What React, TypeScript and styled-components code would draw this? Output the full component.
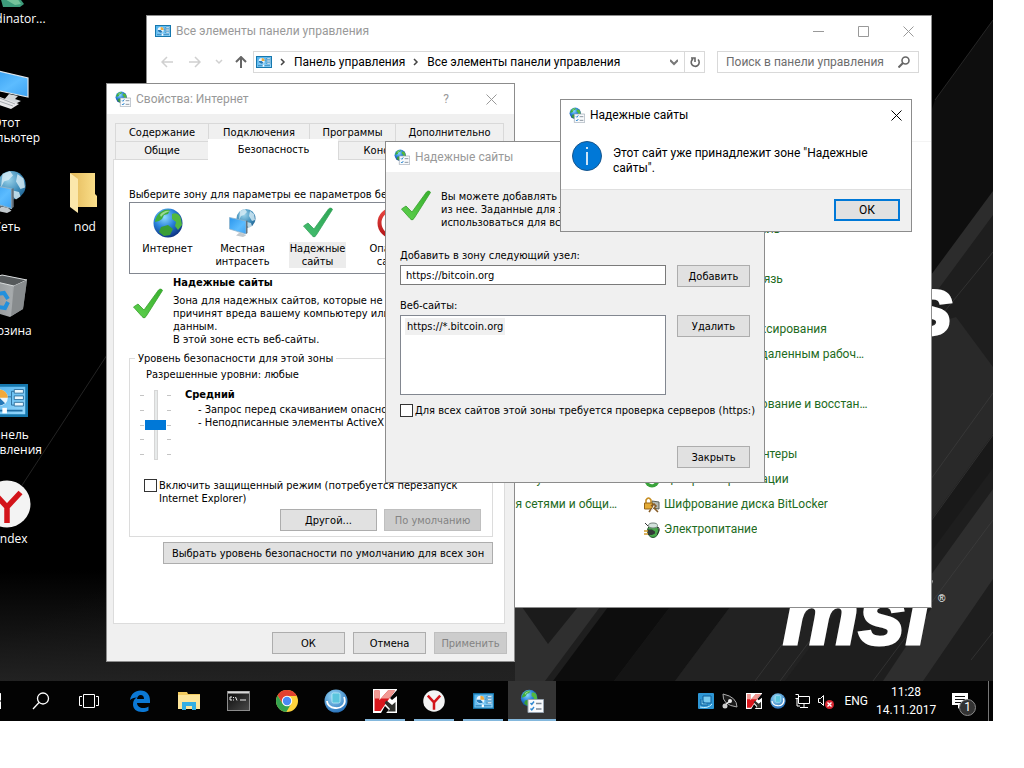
import React from 'react';
import styled, { createGlobalStyle, css } from 'styled-components';

const tahoma = '"DejaVu Sans Condensed", "Open Sans", sans-serif';
const segoe = 'Roboto, "Open Sans", sans-serif';

const GlobalStyle = createGlobalStyle`
  * { box-sizing: border-box; }
  body { margin: 0; background: #fff; font-family: ${segoe}; font-size: 12px; line-height: 15px; color: #000; }
  button, input { font: inherit; color: inherit; margin: 0; }
  ul { list-style: none; margin: 0; padding: 0; }
  p, h1, h2 { margin: 0; }
  svg { display: block; flex: none; }
`;

/* ---------- icons ---------- */

const GlobeShapes = () => (
  <>
    <circle cx="16" cy="16" r="14.5" fill="url(#globeFill)" />
    <path d="M5 9c4-6 9-7 13-6l-2 4-4 1-2 4-3 2-4 1c0-2 1-4 2-6z" fill="#3fae3c" />
    <path d="M20 7c4-2 8 0 9 5l1 6-4 5-3-4 1-4-4-3z" fill="#52b83f" />
    <path d="M9 20l7-2 5 4-3 6-6 1-5-4z" fill="#3a9e35" />
    <path d="M8 8c2-3 6-5 10-4-3 1-7 3-9 6z" fill="#d9f5c9" opacity=".6" />
  </>
);

const Gradients = () => (
  <svg width="0" height="0" aria-hidden="true" style={{ position: 'absolute' }}>
    <defs>
      <radialGradient id="globeFill" cx=".38" cy=".3" r=".8">
        <stop offset="0" stopColor="#8fdcff" />
        <stop offset=".45" stopColor="#2a82dc" />
        <stop offset="1" stopColor="#07226f" />
      </radialGradient>
      <radialGradient id="netFill" cx=".4" cy=".3" r=".8">
        <stop offset="0" stopColor="#9bd3ea" />
        <stop offset=".6" stopColor="#3b8ab8" />
        <stop offset="1" stopColor="#1d5b8a" />
      </radialGradient>
      <linearGradient id="screenFill" x1="0" y1="0" x2="1" y2="1">
        <stop offset="0" stopColor="#2b96ec" />
        <stop offset=".6" stopColor="#5cbcff" />
        <stop offset="1" stopColor="#3da2f2" />
      </linearGradient>
      <linearGradient id="panelFill" x1="0" y1="0" x2="1" y2="1">
        <stop offset="0" stopColor="#4bb0ec" />
        <stop offset="1" stopColor="#98d8fc" />
      </linearGradient>
      <linearGradient id="tickFill" x1="1" y1="0" x2="0" y2="1">
        <stop offset="0" stopColor="#38b02e" />
        <stop offset="1" stopColor="#5fd14e" />
      </linearGradient>
      <linearGradient id="tickTeal" x1="1" y1="0" x2="0" y2="1">
        <stop offset="0" stopColor="#2da553" />
        <stop offset="1" stopColor="#45be70" />
      </linearGradient>
      <linearGradient id="binFill" x1="0" y1="0" x2="1" y2="0">
        <stop offset="0" stopColor="#8b8f92" />
        <stop offset=".6" stopColor="#a7abad" />
        <stop offset="1" stopColor="#6f7375" />
      </linearGradient>
      <linearGradient id="folderFill" x1="0" y1="0" x2="1" y2="0">
        <stop offset="0" stopColor="#e3b95a" />
        <stop offset="1" stopColor="#fbe08c" />
      </linearGradient>
      <linearGradient id="redFill" x1="0" y1="0" x2="0" y2="1">
        <stop offset="0" stopColor="#ee4b45" />
        <stop offset="1" stopColor="#ad1013" />
      </linearGradient>
      <radialGradient id="blueOrb" cx=".4" cy=".3" r=".8">
        <stop offset="0" stopColor="#9bdcf8" />
        <stop offset="1" stopColor="#1c66b4" />
      </radialGradient>
      <linearGradient id="cmdFill" x1="0" y1="0" x2="1" y2="1">
        <stop offset="0" stopColor="#0a0a0a" />
        <stop offset="1" stopColor="#4a4a4a" />
      </linearGradient>
    </defs>
  </svg>
);

const Globe = ({ size = 32 }: { size?: number }) => (
  <svg width={size} height={size} viewBox="0 0 32 32"><GlobeShapes /></svg>
);

const OptionsIcon = ({ size = 16 }: { size?: number }) => (
  <svg width={size} height={size} viewBox="0 0 24 24">
    <g transform="scale(.58)"><GlobeShapes /></g>
    <path d="M8 10.500h15.500V23.500H8z" fill="#f8fafc" stroke="#98a4b0" />
    <path d="M10.500 14l1.300 1.500 2.200-3M10.500 19.500l1.300 1.500 2.200-3" fill="none" stroke="#2c86d0" strokeWidth="1.400" />
    <path d="M16 14.500h5.500M16 20h5.500" stroke="#7c8894" strokeWidth="1.300" />
  </svg>
);

const NetworkIcon = ({ size = 32 }: { size?: number }) => (
  <svg width={size} height={size} viewBox="0 0 32 32">
    <circle cx="19" cy="11.500" r="9.500" fill="url(#netFill)" />
    <path d="M13 4l5-2 2 3-3 3-3 1-2 4zM23 4l4 3 1 6-3 1-3-5zM20 15l4 1 1 3-3 2-3-3z" fill="#d9eef6" opacity=".8" />
    <path d="M2.500 10.500l16.500 3.500V27L2.500 22z" fill="url(#screenFill)" stroke="#8fb4cc" strokeWidth=".8" />
    <path d="M19 14l1.500-.5v12.500L19 27z" fill="#66727c" />
    <path d="M9 25l3 1-3 2.500 7 1.500 3-1.500-2.500-2" fill="#c2c9ce" />
  </svg>
);

const MonitorIcon = () => (
  <svg width="48" height="48" viewBox="0 0 48 48">
    <path d="M3 4l42 10v19L3 24z" fill="url(#screenFill)" stroke="#dfe5ea" strokeWidth="1.200" />
    <path d="M26 30l9 2-3 3 6 2-6 3-12-3z" fill="#d3d7da" />
    <path d="M12 31l24 9-8 5L4 37z" fill="#e8e8ea" />
    <path d="M10 35l20 7M14 33l18 7" stroke="#a6abb0" />
  </svg>
);

const BinIcon = () => (
  <svg width="48" height="48" viewBox="0 0 48 48">
    <path d="M5 8l14-5 25 5-4 29-13 8-16-5z" fill="url(#binFill)" />
    <path d="M5 8l14-5 25 5-13 6z" fill="#55595b" stroke="#d7dadb" />
    <path d="M31 14l13-6-4 29-12 7z" fill="#888c8e" />
    <path d="M14 22l7-1 4 6M25 30l-3 6-7-1" fill="none" stroke="#2290dd" strokeWidth="4" />
  </svg>
);

const PanelIcon = ({ w = 16 }: { w?: number }) => (
  <svg width={w} height={Math.round((w * 3) / 4)} viewBox="0 0 48 36">
    <rect x="1.500" y="1.500" width="45" height="33" fill="url(#panelFill)" stroke="#1677ad" strokeWidth="3" />
    <circle cx="17" cy="15" r="9" fill="#eaf6fd" />
    <path d="M17 15V6a9 9 0 0 1 9 9z" fill="#f2a93a" />
    <path d="M8 15h9l6 6a9 9 0 0 1-15-6z" fill="#2579b8" />
    <path d="M26 14h4V8h3M30 14v9h3" fill="none" stroke="#2c6f9e" />
    <path d="M33 6h10v4H33zM33 13h10v4H33zM33 20h10v4H33z" fill="#e9f6fd" stroke="#2c6f9e" />
    <path d="M6 29h36" stroke="#1f6da3" strokeWidth="2" />
    <path d="M20 26h5v6h-5z" fill="#fff" />
  </svg>
);

const YandexIcon = ({ size = 48 }: { size?: number }) => (
  <svg width={size} height={size} viewBox="0 0 48 48">
    <circle cx="24" cy="24" r="23.500" fill="#f3f3f3" />
    <path d="M10.500 12.500L24 27 37.500 12.500M24 26v17" fill="none" stroke="#d3141a" strokeWidth="5.500" />
  </svg>
);

const FolderIcon = () => (
  <svg width="48" height="48" viewBox="0 0 48 48">
    <path d="M9 5h25v21l2 2v11H17z" fill="url(#folderFill)" />
    <path d="M9 5l8 6v34l-8-6z" fill="#fbe7ab" />
  </svg>
);

const TickIcon = ({ teal = false }: { teal?: boolean }) => (
  <svg width="32" height="32" viewBox="0 0 32 32">
    <path d="M1.500 19l4.500-3 6 6L26.500 2c1.500-1.500 3.500-1 4 .5L14 28.500q-2 3-4 0z"
      fill={teal ? 'url(#tickTeal)' : 'url(#tickFill)'} stroke={teal ? '#36a25c' : '#37a02c'} strokeWidth=".8" />
  </svg>
);

const BlockedIcon = () => (
  <svg width="32" height="32" viewBox="0 0 32 32">
    <circle cx="16" cy="16" r="15.500" fill="url(#redFill)" />
    <circle cx="16" cy="16" r="9.500" fill="none" stroke="#fff" strokeWidth="4" />
    <path d="M9.500 9.500l13 13" stroke="#fff" strokeWidth="4" />
  </svg>
);

const InfoIcon = () => (
  <svg width="30" height="30" viewBox="0 0 30 30">
    <circle cx="15" cy="15" r="14.500" fill="#0078d7" stroke="#17558c" />
    <path d="M15 11v13M15 6v2" stroke="#fff" strokeWidth="1.600" />
  </svg>
);

const CloseIcon = () => (
  <svg width="11" height="11" viewBox="0 0 11 11"><path d="M.5.5l10 10M10.500.5l-10 10" stroke="currentColor" /></svg>
);

const TeamIcon = () => (
  <svg width="48" height="48" viewBox="0 0 48 48"><path d="M17 36h18l6 8-4 3H20z" fill="#3d9c7b" /><path d="M20 38h14l4 6-6 1z" fill="#75c39b" /></svg>
);

const OrbIcon = ({ size = 24 }: { size?: number }) => (
  <svg width={size} height={size} viewBox="0 0 24 24">
    <circle cx="12" cy="12" r="11.500" fill="url(#blueOrb)" />
    <path d="M20 8c3 7-3 12-9 11-5 0-8-4-8-7" fill="none" stroke="#fff" strokeWidth="1.800" />
    <rect x="8" y="4" width="8" height="10" rx="1.500" fill="#5bc5dd" stroke="#c4f1fa" strokeWidth=".7" />
  </svg>
);

const KasperskyIcon = ({ size = 24 }: { size?: number }) => (
  <svg width={size} height={size} viewBox="0 0 24 24">
    <path d="M0 0h24v1l-7 8 2 2 5-4v17h-11l3-3-4-4-4 7H0z" fill="#fff" />
    <path d="M1.500 1.500h5V11l8.500-9.500h7L7.500 22H1.500z" fill="#d9161c" />
    <path d="M1.500 1.500h5V11l8.500-9.500h7L16 9.500H1.500z" fill="#f19a94" />
    <path d="M11.500 14l2-2.500 5.500 4.500 3.500-3v9.500H15l2-2.500z" fill="#30302c" />
  </svg>
);

const EdgeIcon = () => (
  <svg width="22" height="22" viewBox="0 0 22 22">
    <path d="M1 10C2 4 6 .5 11.500.5 18 .5 21 5 21 10.500V13H8c.3 3.500 3 5 6 5 2.200 0 4-.5 5.500-1.500v4c-2 1-4 1.500-6.500 1.500-5.500 0-9-3-9-7.500C4 11 5.500 8.500 8 7.500 5 7.500 2.500 8.500 1 10zm7-1h7c0-2.500-1.200-4-3.300-4C9.500 5 8.300 6.700 8 9z" fill="#0b78d4" />
  </svg>
);

const ExplorerIcon = () => (
  <svg width="22" height="20" viewBox="0 0 22 20">
    <path d="M0 1h9l1 2h12v15H0z" fill="#f3cb5f" /><path d="M0 4h22v14H0z" fill="#fde59a" />
    <path d="M4 11h14v8h-4v-4H8v4H4z" fill="#34aee2" />
  </svg>
);

const CmdIcon = () => (
  <svg width="23" height="20" viewBox="0 0 23 20">
    <rect x=".5" y=".5" width="22" height="19" fill="url(#cmdFill)" stroke="#8c8c8c" />
    <path d="M1 1.500h21" stroke="#d8d8d8" strokeWidth="2" />
    <path d="M5 6H3v3h2M6.500 6v1M6.500 8.500v1M8.500 6l1.500 3.500M13 9h6" fill="none" stroke="#eee" />
  </svg>
);

const ChromeIcon = () => (
  <svg width="22" height="22" viewBox="0 0 22 22">
    <circle cx="11" cy="11" r="11" fill="#fdd23c" />
    <path d="M11 6h9.800A11 11 0 0 0 1.500 5.500L6.500 13.500 11 11z" fill="#e2402f" />
    <path d="M1.500 5.500a11 11 0 0 0 8.800 16.500L15 14l-8.500-.5z" fill="#34a350" />
    <circle cx="11" cy="11" r="5.200" fill="#fff" /><circle cx="11" cy="11" r="4.200" fill="#4a8af4" />
  </svg>
);

/* ---------- desktop ---------- */

const Page = styled.div`
  min-height: 100vh;
  display: flex;
  flex-direction: column;
  padding: 0 31px 47px 0;
  overflow: hidden;
`;

const Screen = styled.div`
  flex: 1;
  display: flex;
  flex-direction: column;
  overflow: hidden;
  background: #000;
`;

const Desktop = styled.main`
  position: relative;
  flex: 1;
  min-height: 664px;
  overflow: hidden;
`;

const Backdrop = styled.svg`
  position: absolute;
  inset: 0;
  width: 100%;
  height: 100%;
`;

const Shortcuts = styled.nav`
  position: absolute;
  top: -40px;
  left: -31px;
  display: grid;
  grid-template-columns: 76px 76px;
  grid-auto-rows: 104px;
  column-gap: 2px;
  font-family: "Open Sans", sans-serif;
`;

const Shortcut = styled.a<{ $col?: number; $row: number }>`
  grid-column: ${p => p.$col ?? 1};
  grid-row: ${p => p.$row};
  display: flex;
  flex-direction: column;
  align-items: center;
  gap: 3px;
  color: #fff;
  text-align: center;
  text-decoration: none;
  text-shadow: 0 1px 2px #000;
`;

const Wallpaper = () => (
  <Backdrop viewBox="0 0 993 681" preserveAspectRatio="xMaxYMax slice" aria-hidden="true">
    <defs>
      <linearGradient id="wall" x1="0" y1="0" x2=".75" y2="1">
        <stop offset=".6" stopColor="#000" />
        <stop offset=".85" stopColor="#161616" />
        <stop offset="1" stopColor="#242424" />
      </linearGradient>
      <linearGradient id="floor" x1="0" y1="0" x2="0" y2="1">
        <stop offset="0" stopColor="#222" stopOpacity="0" />
        <stop offset="1" stopColor="#222" />
      </linearGradient>
    </defs>
    <rect width="993" height="681" fill="#000" />
    <rect width="993" height="681" fill="url(#wall)" />
    <path d="M0 570h520v111H0z" fill="url(#floor)" />
    <path d="M993 20L935 100l-10 30v140h68z" fill="#0e0e0e" />
    <path d="M931 290l62-84v475H515V607h416z" fill="#1e1e1e" />
    <path d="M931 275l62-84v24l-62 84z" fill="#2c2c2c" />
    <path d="M931 325l25-8 37 50v85l-62 86z" fill="#292929" />
    <path d="M931 520l62-86v34l-62 84z" fill="#191919" />
    <path d="M931 575l62-86v90l-70 102h-40l48-72z" fill="#2e2e2e" />
    <path d="M515 607h85l-55 74h-30z" fill="#2f2f2f" />
    <path d="M522 607h56l-30 37z" fill="#1b1b1b" />
    <path d="M608 607h62l-56 74h-61z" fill="#0d0d0d" />
    <path d="M670 607h60l-55 74h-61z" fill="#141414" />
    <path d="M730 607h110l-55 74H675z" fill="#222" />
    <path d="M0 519L107 355M993 20L935 100M993 252l-62 76M993 393l-62 86M993 435l-62 86M993 520l-120 161M993 632l-22 28M810 607l-55 74M835 607l-55 74" stroke="#454545" fill="none" opacity=".5" />
    <g fill="#fff" stroke="#fff" strokeWidth="3" fontFamily="Liberation Sans, sans-serif" fontWeight="700" fontStyle="italic">
      <text x="783" y="644" fontSize="85">msi</text>
      <text x="908" y="334" fontSize="82">s</text>
    </g>
    <text x="938" y="602" fontSize="10" fill="#fff" fontFamily="Liberation Sans, sans-serif">®</text>
  </Backdrop>
);

/* ---------- windows ---------- */

const Frame = styled.section<{ $x: number; $y: number; $w: number; $h: number }>`
  position: absolute;
  isolation: isolate;
  left: ${p => p.$x}px;
  top: ${p => p.$y}px;
  width: ${p => p.$w}px;
  min-height: ${p => p.$h}px;
  display: flex;
  flex-direction: column;
  border: 1px solid #8c8c8c;
  background: #fff;
`;

const Dialog = styled(Frame)`
  background: #f0f0f0;
  font-family: ${tahoma};
  font-size: 11px;
  line-height: 13px;
`;

const TitleBar = styled.header<{ $active?: boolean }>`
  display: flex;
  align-items: center;
  gap: 5px;
  height: 30px;
  padding: 0 3px 0 8px;
  background: #fff;
  color: ${p => (p.$active ? '#000' : '#999')};
  font-family: ${segoe};
  font-size: 12px;
  h1 { flex: 1; font-size: inherit; font-weight: 400; }
`;

const WindowButtons = styled.div`
  display: flex;
  gap: 21px;
  padding-right: 8px;
`;

const IconButton = styled.button`
  display: flex;
  align-items: center;
  justify-content: center;
  min-width: 24px;
  height: 24px;
  padding: 0;
  border: 0;
  background: none;
`;

const NavBar = styled.div`
  display: flex;
  align-items: center;
  height: 32px;
  padding: 0 12px 0 8px;
  color: #777;
`;

const NavButtons = styled.div`
  display: flex;
  align-items: center;
  width: 98px;
  gap: 4px;
`;

const AddressBar = styled.div`
  flex: 1;
  display: flex;
  align-items: center;
  gap: 7px;
  height: 22px;
  padding-left: 2px;
  border: 1px solid #d9d9d9;
  color: #000;
`;

const AddressEnd = styled.div`
  display: flex;
  margin-left: auto;
  height: 20px;
  color: #777;
  & > button { height: 20px; width: 20px; min-width: 20px; }
  & > button + button { border-left: 1px solid #d9d9d9; }
`;

const SearchBox = styled.label`
  display: flex;
  align-items: center;
  width: 202px;
  height: 22px;
  margin-left: 12px;
  padding: 0 8px;
  border: 1px solid #d9d9d9;
  input { flex: 1; min-width: 0; padding: 0; border: 0; outline: 0; background: none; appearance: none; }
  input::placeholder { color: #6d6d6d; }
`;

const Items = styled.div`
  display: grid;
  grid-template-columns: repeat(3, 226px);
  grid-template-rows: repeat(13, 25px);
  column-gap: 20px;
  margin-top: 63px;
  padding: 75px 5px 0;
  border-top: 1px solid #f4f4f4;
`;

const Item = styled.a<{ $col: number; $row: number }>`
  grid-column: ${p => p.$col};
  grid-row: ${p => p.$row};
  display: flex;
  align-items: center;
  gap: 4px;
  color: #1e6b22;
  text-decoration: none;
  span { overflow: hidden; white-space: nowrap; text-overflow: ellipsis; }
`;

const Button = styled.button<{ $w: number; $default?: boolean }>`
  width: ${p => p.$w}px;
  height: 22px;
  flex: none;
  padding: 0;
  border: ${p => (p.$default ? '2px solid #0078d7' : '1px solid #adadad')};
  background: #e1e1e1;
  white-space: nowrap;
  &:disabled { background: #ccc; border-color: #bfbfbf; color: #838383; }
`;

const CheckRow = styled.label<{ $top?: number }>`
  display: flex;
  align-items: flex-start;
  gap: 2px;
  margin-top: ${p => p.$top ?? 0}px;
  white-space: nowrap;
  input { appearance: none; width: 13px; height: 13px; flex: none; border: 1px solid #333; background: #fff; }
`;

/* ---------- Internet properties ---------- */

const PropertiesBody = styled.div`
  padding: 9px 7px 0 6px;
`;

const TabRow = styled.div<{ $front?: boolean }>`
  display: flex;
  align-items: flex-start;
  height: 18px;
  padding: 0 2px;
  position: relative;
  z-index: ${p => (p.$front ? 1 : 0)};
`;

const Tab = styled.button<{ $w: number; $selected?: boolean }>`
  width: ${p => p.$w}px;
  height: 19px;
  flex: none;
  padding: 0;
  border: 1px solid #d9d9d9;
  border-right-width: 0;
  background: #f0f0f0;
  &:last-child { border-right-width: 1px; }
  ${p => p.$selected && css`
    height: 21px;
    margin-top: -2px;
    background: #fff;
    border-color: #fff;
  `}
`;

const Pane = styled.div`
  height: 465px;
  margin-right: 2px;
  padding: 28px 11px 0 15px;
  border: 1px solid #dcdcdc;
  background: #fff;
`;

const ZoneList = styled.ul`
  display: flex;
  height: 72px;
  margin-top: 1px;
  border: 1px solid #828790;
  overflow: hidden;
`;

const Zone = styled.li<{ $selected?: boolean }>`
  display: flex;
  flex-direction: column;
  align-items: center;
  width: 75px;
  flex: none;
  padding-top: 4px;
  gap: 3px;
  text-align: center;
  span { width: min-content; padding: 0 1px; ${p => p.$selected && 'background: #ececec;'} }
`;

const ZoneInfo = styled.div`
  display: flex;
  gap: 9px;
  padding: 2px 0 0 3px;
  & > svg { margin-top: 12px; }
  h2 { font-size: 11px; line-height: 13px; margin-bottom: 5px; }
`;

const Group = styled.fieldset`
  height: 185px;
  margin: 6px 0 0;
  padding: 3px 11px 0 16px;
  border: 1px solid #dcdcdc;
  min-width: 0;
  legend { margin-left: -11px; padding: 0 3px; }
  & > label { margin-left: -2px; }
`;

const Level = styled.div`
  display: flex;
  gap: 14px;
  height: 85px;
  margin: 7px 0 6px -6px;
  h2 { font-size: 11px; line-height: 13px; margin-bottom: 2px; }
  ul { padding-left: 13px; white-space: nowrap; }
`;

const SliderBox = styled.div`
  display: flex;
  height: 70px;
  margin-top: 2px;
`;

const Ticks = styled.div`
  display: flex;
  flex-direction: column;
  justify-content: space-between;
  width: 4px;
  padding: 5px 0;
  i { height: 1px; background: #c4c4c4; }
`;

const Slider = styled.input`
  appearance: none;
  writing-mode: vertical-lr;
  width: 23px;
  height: 70px;
  background: linear-gradient(#e7eaea, #e7eaea) center / 2px 68px no-repeat, linear-gradient(#d6d6d6, #d6d6d6) center / 4px 70px no-repeat;
  &::-webkit-slider-thumb { appearance: none; width: 21px; height: 10px; background: #0078d7; }
`;

const ButtonRow = styled.div<{ $gap: number; $top: number }>`
  display: flex;
  justify-content: flex-end;
  gap: ${p => p.$gap}px;
  margin-top: ${p => p.$top}px;
`;

/* ---------- Trusted sites ---------- */

const SitesBody = styled.div`
  display: flex;
  flex-direction: column;
  padding: 18px 14px 0;
`;

const Intro = styled.div`
  display: flex;
  gap: 9px;
  height: 46px;
`;

const Field = styled.div<{ $top: number }>`
  display: grid;
  grid-template-columns: 266px 73px;
  justify-content: space-between;
  row-gap: 3px;
  margin-top: ${p => p.$top}px;
  label, span { grid-column: 1 / -1; }
  input { height: 20px; padding: 0 5px; border: 1px solid #7a7a7a; background: #fff; outline: 0; }
`;

const SiteList = styled.ul`
  height: 80px;
  padding: 2px 4px;
  border: 1px solid #828790;
  background: #fff;
  li { width: max-content; padding: 2px; background: #f0f0f0; }
`;

/* ---------- message ---------- */

const Message = styled.div`
  flex: 1;
  display: flex;
  gap: 11px;
  padding: 11px 34px 0 11px;
  p { padding-top: 5px; }
`;

const MessageFooter = styled.footer`
  display: flex;
  justify-content: flex-end;
  padding: 9px 11px 10px;
  border-top: 1px solid #dfdfdf;
  background: #f0f0f0;
`;

/* ---------- taskbar ---------- */

const Taskbar = styled.footer`
  display: flex;
  height: 40px;
  flex: none;
  margin-left: -31px;
  background: #030303;
  color: #fff;
`;

const Launchers = styled.div<{ $gap: number; $left?: number }>`
  display: flex;
  gap: ${p => p.$gap}px;
  margin-left: ${p => p.$left ?? 0}px;
`;

const TaskButton = styled.button<{ $state?: 'open' | 'active' }>`
  position: relative;
  display: flex;
  align-items: center;
  justify-content: center;
  width: 48px;
  height: 40px;
  padding: 0;
  border: 0;
  background: ${p => (p.$state === 'active' ? '#343434' : 'transparent')};
  &::after {
    content: ${p => (p.$state ? '""' : 'none')};
    position: absolute;
    bottom: 0;
    left: ${p => (p.$state === 'active' ? 0 : 4)}px;
    right: ${p => (p.$state === 'active' ? 0 : 4)}px;
    height: 2px;
    background: #84b8dd;
  }
`;

const Tray = styled.div`
  display: flex;
  align-items: center;
  gap: 8px;
  margin-left: auto;
`;

const Language = styled.span`
  margin-left: 2px;
`;

const Clock = styled.time`
  width: 60px;
  text-align: center;
  line-height: 18px;
`;

const Notifications = styled.button`
  position: relative;
  width: 44px;
  height: 40px;
  margin-right: -8px;
  padding: 0 0 0 8px;
  border: 0;
  background: none;
`;

const Badge = styled.span`
  position: absolute;
  left: 15px;
  top: 18px;
  width: 17px;
  height: 17px;
  border: 1px solid #8a8a8a;
  border-radius: 50%;
  background: #333;
  line-height: 15px;
  text-align: center;
`;

const ShowDesktop = styled.div`
  width: 5px;
  height: 40px;
  border-left: 1px solid #777;
`;

const zones = [
  { name: 'Интернет', icon: <Globe /> },
  { name: 'Местная интрасеть', icon: <NetworkIcon /> },
  { name: 'Надежные сайты', icon: <TickIcon teal />, selected: true },
  { name: 'Опасные сайты', icon: <BlockedIcon /> },
];

const GreenDot = () => (
  <svg width="16" height="16" viewBox="0 0 16 16"><circle cx="8" cy="8" r="7.500" fill="#39a33b" /><path d="M4 8a4 4 0 0 1 7-2M12 8a4 4 0 0 1-7 2" stroke="#fff" fill="none" strokeWidth="1.500" /></svg>
);
const LockIcon = () => (
  <svg width="16" height="16" viewBox="0 0 16 16">
    <path d="M8 4l7 1v7l-7-1z" fill="#b6bbb4" stroke="#596058" />
    <path d="M2 6V3q2.500-4 5 0v3" fill="none" stroke="#c58b1d" strokeWidth="1.500" />
    <path d="M.5 6h8v6h-8z" fill="#e4ab36" stroke="#93651a" />
    <path d="M7 9l3-2 2 2-2 2 4 4M8 11l-3 4" fill="none" stroke="#875c26" strokeWidth="1.600" />
    <path d="M10 9l-3 5" stroke="#eee" />
  </svg>
);
const PowerIcon = () => (
  <svg width="16" height="16" viewBox="0 0 16 16">
    <ellipse cx="9" cy="9" rx="5.500" ry="6.500" fill="#48a94a" stroke="#22552b" />
    <ellipse cx="9" cy="3.500" rx="4.500" ry="2.500" fill="#d4e2dc" stroke="#73827b" />
    <path d="M14 5q3 3-1 7" fill="none" stroke="#333" />
    <path d="M0 9h4M0 12h4" stroke="#d19a2c" strokeWidth="1.500" />
    <path d="M4 7.500h4l3 2v2L8 13H4z" fill="#343b38" />
    <path d="M1 1l3 3" stroke="#333" />
  </svg>
);

const items = [
  { col: 3, row: 1, name: 'Графическая панель' },
  { col: 3, row: 3, name: 'Инфракрасная связь' },
  { col: 3, row: 5, name: 'Параметры индексирования' },
  { col: 3, row: 6, name: 'Подключения к удаленным рабочим столам' },
  { col: 3, row: 8, name: 'Резервное копирование и восстановление' },
  { col: 3, row: 10, name: 'Устройства и принтеры' },
  { col: 2, row: 11, name: 'Безопасность и обслуживание компьютера' },
  { col: 3, row: 11, name: 'Центр синхронизации', icon: <GreenDot /> },
  { col: 2, row: 12, name: 'Центр управления сетями и общим доступом' },
  { col: 3, row: 12, name: 'Шифрование диска BitLocker', icon: <LockIcon /> },
  { col: 3, row: 13, name: 'Электропитание', icon: <PowerIcon /> },
];

const Chevron = ({ down = false }: { down?: boolean }) => (
  <svg width="8" height="8" viewBox="0 0 8 8"><path d={down ? 'M0 2l4 4 4-4' : 'M2 1l3 3-3 3'} fill="none" stroke={down ? '#777' : '#444'} strokeWidth={down ? 2 : 1.5} /></svg>
);

const ControlPanel = () => (
  <Frame $x={146} $y={15} $w={786} $h={593}>
    <TitleBar>
      <PanelIcon />
      <h1>Все элементы панели управления</h1>
      <WindowButtons>
        <IconButton aria-label="Свернуть"><svg width="11" height="11"><path d="M0 5.500h11" stroke="currentColor" /></svg></IconButton>
        <IconButton aria-label="Развернуть"><svg width="11" height="11"><path d="M.5.5h10v10H.5z" fill="none" stroke="currentColor" /></svg></IconButton>
        <IconButton aria-label="Закрыть"><CloseIcon /></IconButton>
      </WindowButtons>
    </TitleBar>
    <NavBar>
      <NavButtons>
        <IconButton aria-label="Назад"><svg width="12" height="12"><path d="M12 6H1M6 1L1 6l5 5" fill="none" stroke="#d0d0d0" strokeWidth="1.500" /></svg></IconButton>
        <IconButton aria-label="Вперед"><svg width="12" height="12"><path d="M0 6h11M6 1l5 5-5 5" fill="none" stroke="#d0d0d0" strokeWidth="1.500" /></svg></IconButton>
        <svg width="14" height="6"><path d="M5 1l3 3 3-3" fill="none" stroke="#d0d0d0" strokeWidth="1.500" /></svg>
        <IconButton aria-label="Вверх"><svg width="12" height="12"><path d="M6 12V1M1 6l5-5 5 5" fill="none" stroke="#666" strokeWidth="2" /></svg></IconButton>
      </NavButtons>
      <AddressBar>
        <PanelIcon />
        <Chevron />
        <span>Панель управления</span>
        <Chevron />
        <span>Все элементы панели управления</span>
        <AddressEnd>
          <IconButton aria-label="Журнал"><Chevron down /></IconButton>
          <IconButton aria-label="Обновить"><svg width="12" height="12"><path d="M9 3.500A4 4 0 1 1 4 3M2 2h4v4" fill="none" stroke="#666" strokeWidth="1.600" /></svg></IconButton>
        </AddressEnd>
      </AddressBar>
      <SearchBox>
        <input type="search" placeholder="Поиск в панели управления" aria-label="Поиск в панели управления" />
        <svg width="12" height="12"><circle cx="7.500" cy="4.500" r="3.500" fill="none" stroke="#666" strokeWidth="1.600" /><path d="M5 7l-4.500 4.500" stroke="#666" strokeWidth="2" /></svg>
      </SearchBox>
    </NavBar>
    <Items>
      {items.map(i => (
        <Item key={i.name} href="#" $col={i.col} $row={i.row}>
          {i.icon ?? <PanelIcon />}
          <span>{i.name}</span>
        </Item>
      ))}
    </Items>
  </Frame>
);

const InternetProperties = () => (
  <Dialog $x={106} $y={83} $w={409} $h={579}>
    <TitleBar>
      <OptionsIcon />
      <h1>Свойства: Интернет</h1>
      <WindowButtons>
        <IconButton aria-label="Справка">?</IconButton>
        <IconButton aria-label="Закрыть"><CloseIcon /></IconButton>
      </WindowButtons>
    </TitleBar>
    <PropertiesBody>
      <TabRow>
        <Tab $w={93}>Содержание</Tab>
        <Tab $w={101}>Подключения</Tab>
        <Tab $w={86}>Программы</Tab>
        <Tab $w={109}>Дополнительно</Tab>
      </TabRow>
      <TabRow $front>
        <Tab $w={93}>Общие</Tab>
        <Tab $w={130} $selected>Безопасность</Tab>
        <Tab $w={166}>Конфиденциальность</Tab>
      </TabRow>
      <Pane>
        <p>Выберите зону для параметры ее параметров безопасности.</p>
        <ZoneList>
          {zones.map(z => (
            <Zone key={z.name} $selected={z.selected}>{z.icon}<span>{z.name}</span></Zone>
          ))}
        </ZoneList>
        <ZoneInfo>
          <TickIcon />
          <div>
            <h2>Надежные сайты</h2>
            <p>Зона для надежных сайтов, которые не<br />причинят вреда вашему компьютеру или<br />данным.<br />В этой зоне есть веб-сайты.</p>
          </div>
        </ZoneInfo>
        <Group>
          <legend>Уровень безопасности для этой зоны</legend>
          <p>Разрешенные уровни: любые</p>
          <Level>
            <SliderBox>
              <Ticks><i /><i /><i /><i /><i /></Ticks>
              <Slider type="range" min="0" max="4" defaultValue="2" aria-label="Уровень безопасности" />
              <Ticks><i /><i /><i /><i /><i /></Ticks>
            </SliderBox>
            <div>
              <h2>Средний</h2>
              <ul>
                <li>- Запрос перед скачиванием опасного</li>
                <li>- Неподписанные элементы ActiveX не</li>
              </ul>
            </div>
          </Level>
          <CheckRow>
            <input type="checkbox" />
            <span>Включить защищенный режим (потребуется перезапуск<br />Internet Explorer)</span>
          </CheckRow>
          <ButtonRow $gap={7} $top={4}>
            <Button $w={97}>Другой...</Button>
            <Button $w={97} disabled>По умолчанию</Button>
          </ButtonRow>
        </Group>
        <ButtonRow $gap={0} $top={5}>
          <Button $w={330}>Выбрать уровень безопасности по умолчанию для всех зон</Button>
        </ButtonRow>
      </Pane>
      <ButtonRow $gap={8} $top={8}>
        <Button $w={73}>ОК</Button>
        <Button $w={73}>Отмена</Button>
        <Button $w={73} disabled>Применить</Button>
      </ButtonRow>
    </PropertiesBody>
  </Dialog>
);

const TrustedSites = () => (
  <Dialog $x={385} $y={141} $w={380} $h={342}>
    <TitleBar>
      <OptionsIcon />
      <h1>Надежные сайты</h1>
    </TitleBar>
    <SitesBody>
      <Intro>
        <TickIcon />
        <p>Вы можете добавлять в эту зону веб-сайты и удалять их<br />из нее. Заданные для зоны параметры защиты будут<br />использоваться для всех сайтов зоны.</p>
      </Intro>
      <Field $top={13}>
        <label htmlFor="node">Добавить в зону следующий узел:</label>
        <input id="node" defaultValue="https://bitcoin.org" />
        <Button $w={73}>Добавить</Button>
      </Field>
      <Field $top={12}>
        <span>Веб-сайты:</span>
        <SiteList><li>https://*.bitcoin.org</li></SiteList>
        <Button $w={73}>Удалить</Button>
      </Field>
      <CheckRow $top={9}>
        <input type="checkbox" />
        <span>Для всех сайтов этой зоны требуется проверка серверов (https:)</span>
      </CheckRow>
      <ButtonRow $gap={0} $top={29}>
        <Button $w={73}>Закрыть</Button>
      </ButtonRow>
    </SitesBody>
  </Dialog>
);

const MessageBox = () => (
  <Frame $x={560} $y={99} $w={352} $h={133}>
    <TitleBar $active>
      <OptionsIcon />
      <h1>Надежные сайты</h1>
      <IconButton aria-label="Закрыть"><CloseIcon /></IconButton>
    </TitleBar>
    <Message>
      <InfoIcon />
      <p>Этот сайт уже принадлежит зоне "Надежные сайты".</p>
    </Message>
    <MessageFooter>
      <Button $w={66} $default>ОК</Button>
    </MessageFooter>
  </Frame>
);

const App = () => (
  <Page>
    <GlobalStyle />
    <Gradients />
    <Screen>
      <Desktop>
        <Wallpaper />
        <Shortcuts>
          <Shortcut href="#" $row={1}><TeamIcon />Coordinator...</Shortcut>
          <Shortcut href="#" $row={2}><MonitorIcon />Этот компьютер</Shortcut>
          <Shortcut href="#" $row={3}><NetworkIcon size={48} />Сеть</Shortcut>
          <Shortcut href="#" $row={3} $col={2}><FolderIcon />nod</Shortcut>
          <Shortcut href="#" $row={4}><BinIcon />Корзина</Shortcut>
          <Shortcut href="#" $row={5}><svg width="48" height="48" viewBox="0 0 48 48"><g transform="translate(1 8)"><PanelIcon w={44} /></g></svg>Панель управления</Shortcut>
          <Shortcut href="#" $row={6}><YandexIcon />Yandex</Shortcut>
        </Shortcuts>
        <ControlPanel />
        <InternetProperties />
        <TrustedSites />
        <MessageBox />
      </Desktop>
      <Taskbar>
        <Launchers $gap={0}>
          <TaskButton aria-label="Пуск"><svg width="16" height="16"><path d="M0 2l7-1v6.500H0zM8 1l8-1v7.500H8zM0 8.500h7V15l-7-1zM8 8.500h8V16l-8-1z" fill="#fff" /></svg></TaskButton>
          <TaskButton aria-label="Поиск"><svg width="18" height="18"><circle cx="11" cy="6.500" r="5.500" fill="none" stroke="#fff" strokeWidth="1.300" /><path d="M7 10.500L1 17" stroke="#fff" strokeWidth="1.300" /></svg></TaskButton>
          <TaskButton aria-label="Представление задач"><svg width="20" height="14"><path d="M4.500.5h11v13h-11zM3 2.500H.5v9H3M17 2.500h2.500v9H17" fill="none" stroke="#fff" /></svg></TaskButton>
        </Launchers>
        <Launchers $gap={1} $left={3}>
          <TaskButton aria-label="Edge"><EdgeIcon /></TaskButton>
          <TaskButton aria-label="Проводник"><ExplorerIcon /></TaskButton>
          <TaskButton aria-label="Командная строка"><CmdIcon /></TaskButton>
          <TaskButton aria-label="Chrome"><ChromeIcon /></TaskButton>
          <TaskButton aria-label="Coordinator"><OrbIcon /></TaskButton>
          <TaskButton aria-label="Kaspersky" $state="open"><KasperskyIcon /></TaskButton>
          <TaskButton aria-label="Yandex" $state="open"><YandexIcon size={22} /></TaskButton>
          <TaskButton aria-label="Панель управления" $state="open"><PanelIcon w={21} /></TaskButton>
          <TaskButton aria-label="Свойства: Интернет" $state="active"><OptionsIcon size={24} /></TaskButton>
        </Launchers>
        <Tray>
          <svg width="16" height="16"><rect width="16" height="16" rx="1" fill="#2d96d5" /><path d="M5 3h8v7H5zM3 6v6h7" fill="#79cbf0" stroke="#0e5c96" /><path d="M2 14q8 2 12-3" fill="none" stroke="#c4ecfc" /></svg>
          <svg width="16" height="16"><path d="M1 1Q0 12 15 14 15 4 1 1z" fill="#1a1a1a" stroke="#aaa" /><path d="M3 12l5-4" stroke="#eee" strokeWidth="1.500" /><circle cx="8" cy="8" r="2" fill="#eee" /><circle cx="3" cy="13" r="2.500" fill="#ccc" /></svg>
          <KasperskyIcon size={16} />
          <OrbIcon size={16} />
          <svg width="16" height="16"><path d="M4.500 3.500h11v7h-11zM10 11v3M6 14.500h8M1.500 1.500h3v4h-3M3 6v7h3" fill="none" stroke="#fff" /></svg>
          <svg width="16" height="16"><path d="M.5 5.500h2l3-3v10l-3-3h-2z" fill="none" stroke="#fff" /><circle cx="11.500" cy="11.500" r="4.500" fill="#d92732" /><path d="M9.500 9.500l4 4M13.500 9.500l-4 4" stroke="#fff" strokeWidth="1.300" /></svg>
          <Language>ENG</Language>
          <Clock>11:28<br />14.11.2017</Clock>
          <Notifications aria-label="Центр уведомлений">
            <svg width="16" height="16"><path d="M0 0h16v12H9l-3 4v-4H0z" fill="#fff" /><path d="M3 3.500h10M3 6.500h10M3 9.500h6" stroke="#111" /></svg>
            <Badge>1</Badge>
          </Notifications>
          <ShowDesktop />
        </Tray>
      </Taskbar>
    </Screen>
  </Page>
);

export default App;
